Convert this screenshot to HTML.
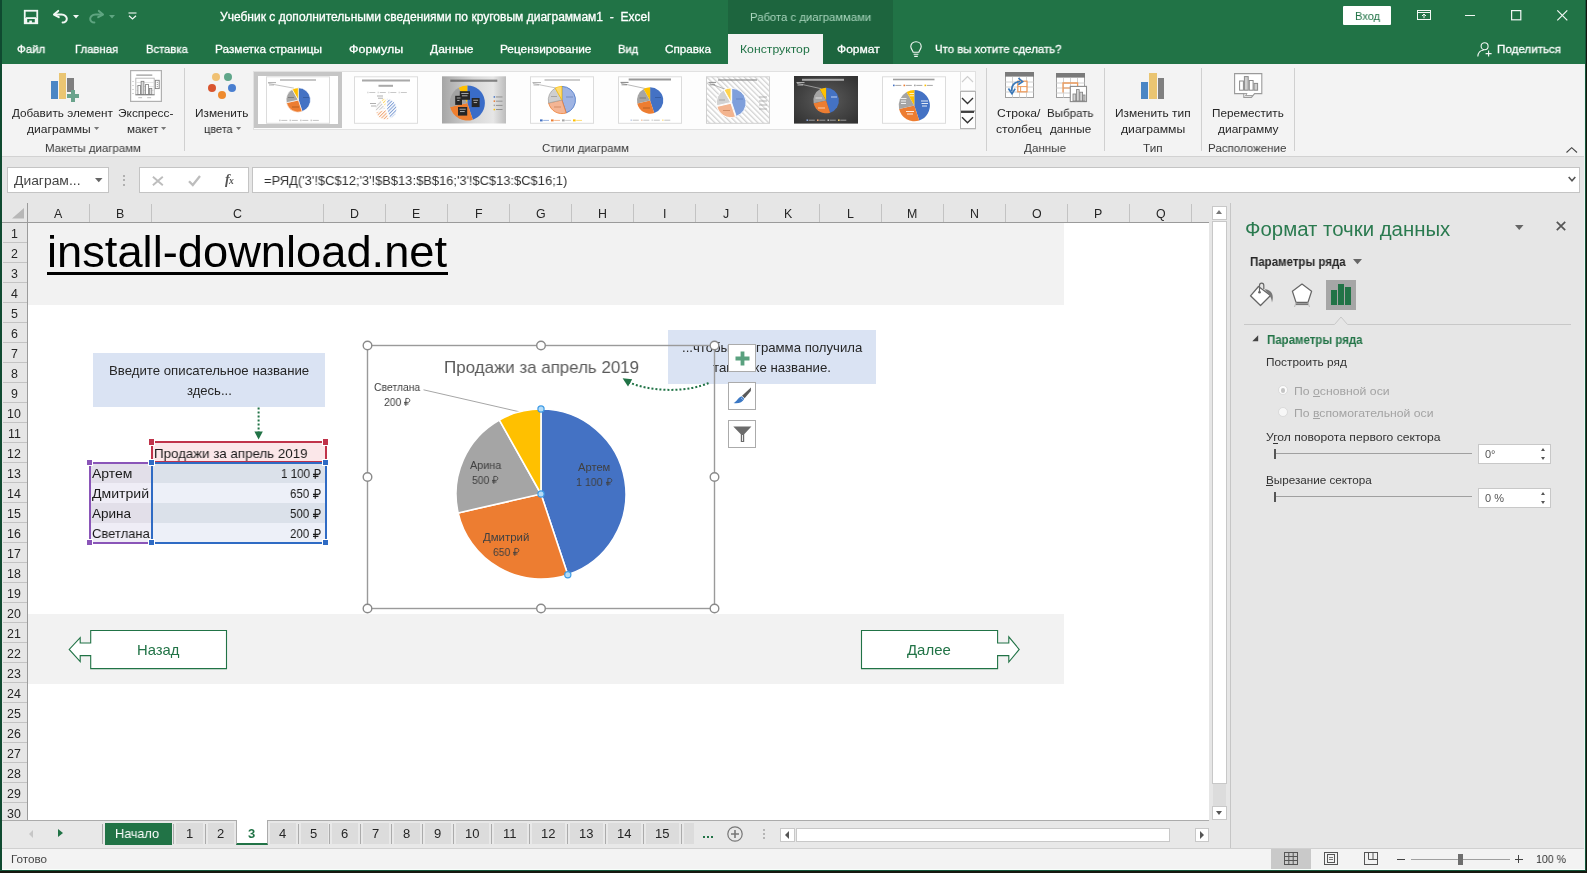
<!DOCTYPE html>
<html><head><meta charset="utf-8"><title>Excel</title>
<style>
html,body{margin:0;padding:0;}
body{width:1587px;height:873px;overflow:hidden;position:relative;background:#15170f;font-family:"Liberation Sans", sans-serif;}
body div,body span.t,body svg{position:absolute;}
span.t{white-space:nowrap;transform-origin:0 50%;will-change:transform;}
svg{overflow:visible;}
</style></head><body>
<div style="left:0px;top:0px;width:2px;height:870px;background:#0f4a30;"></div>
<div style="left:1585px;top:0px;width:1px;height:871px;background:#14553a;"></div>
<div style="left:0px;top:870px;width:1586px;height:1px;background:#14553a;"></div>
<div style="left:2px;top:0px;width:1583px;height:64px;background:#217346;"></div>
<div style="left:728px;top:0px;width:165px;height:64px;background:#1d653e;"></div>
<div style="left:728px;top:34px;width:95px;height:30px;background:#f3f3f3;"></div>
<span class="t" style="left:220.20px;top:9.64px;font-size:12px;line-height:14px;color:#fff;transform:scaleX(1.0022);white-space:pre;-webkit-text-stroke:0.3px #fff;">Учебник с дополнительными сведениями по круговым диаграммам1  -  Excel</span>
<span class="t" style="left:750.40px;top:9.93px;font-size:11.7px;line-height:14px;color:#a9d5bd;transform:scaleX(0.9692);">Работа с диаграммами</span>
<span class="t" style="left:17.30px;top:41.93px;font-size:11.7px;line-height:14px;color:#fff;transform:scaleX(0.9779);-webkit-text-stroke:0.3px #fff;">Файл</span>
<span class="t" style="left:75.40px;top:41.93px;font-size:11.7px;line-height:14px;color:#fff;transform:scaleX(0.9689);-webkit-text-stroke:0.3px #fff;">Главная</span>
<span class="t" style="left:146.20px;top:41.93px;font-size:11.7px;line-height:14px;color:#fff;transform:scaleX(0.9620);-webkit-text-stroke:0.3px #fff;">Вставка</span>
<span class="t" style="left:215.00px;top:41.93px;font-size:11.7px;line-height:14px;color:#fff;transform:scaleX(1.0091);-webkit-text-stroke:0.3px #fff;">Разметка страницы</span>
<span class="t" style="left:348.70px;top:41.93px;font-size:11.7px;line-height:14px;color:#fff;transform:scaleX(1.0676);-webkit-text-stroke:0.3px #fff;">Формулы</span>
<span class="t" style="left:430.00px;top:41.93px;font-size:11.7px;line-height:14px;color:#fff;transform:scaleX(1.0300);-webkit-text-stroke:0.3px #fff;">Данные</span>
<span class="t" style="left:500.00px;top:41.93px;font-size:11.7px;line-height:14px;color:#fff;transform:scaleX(1.0127);-webkit-text-stroke:0.3px #fff;">Рецензирование</span>
<span class="t" style="left:618.00px;top:41.93px;font-size:11.7px;line-height:14px;color:#fff;transform:scaleX(0.9595);-webkit-text-stroke:0.3px #fff;">Вид</span>
<span class="t" style="left:665.00px;top:41.93px;font-size:11.7px;line-height:14px;color:#fff;transform:scaleX(1.0031);-webkit-text-stroke:0.3px #fff;">Справка</span>
<span class="t" style="left:837.00px;top:41.93px;font-size:11.7px;line-height:14px;color:#fff;transform:scaleX(1.0305);-webkit-text-stroke:0.3px #fff;">Формат</span>
<span class="t" style="left:740.00px;top:41.93px;font-size:11.7px;line-height:14px;color:#217346;transform:scaleX(1.0459);">Конструктор</span>
<span class="t" style="left:935.20px;top:41.93px;font-size:11.7px;line-height:14px;color:#fff;transform:scaleX(0.9791);-webkit-text-stroke:0.3px #fff;">Что вы хотите сделать?</span>
<span class="t" style="left:1496.50px;top:41.93px;font-size:11.7px;line-height:14px;color:#fff;transform:scaleX(0.9915);-webkit-text-stroke:0.3px #fff;">Поделиться</span>
<div style="left:1343px;top:6px;width:48px;height:19px;background:#fff;border-radius:1px;"></div>
<span class="t" style="left:1354.90px;top:8.73px;font-size:11.7px;line-height:14px;color:#217346;transform:scaleX(0.9488);">Вход</span>
<svg style="left:24px;top:10px;" width="14" height="14" viewBox="0 0 14 14"><rect x="0.75" y="0.75" width="12.5" height="12.5" fill="none" stroke="#f2f7f4" stroke-width="1.8"/><rect x="2" y="7.2" width="10" height="1.8" fill="#f2f7f4"/><rect x="1" y="8" width="2.2" height="5" fill="#f2f7f4"/><rect x="10.8" y="8" width="2.2" height="5" fill="#f2f7f4"/><rect x="5.3" y="10.6" width="2.6" height="2.6" fill="#f2f7f4"/></svg>
<svg style="left:52.5px;top:9.6px;" width="15" height="14" viewBox="0 0 15 14"><g fill="none" stroke="#f2f7f4" stroke-width="2" stroke-linecap="round" stroke-linejoin="round"><path d="M5.2 0.9 L1 4.6 L5.8 7.2"/><path d="M1.6 4.6 H8.5 C12 4.6 13.8 7 13.8 8.8 C13.8 11 12 12.6 9.6 12.6"/></g></svg>
<svg style="left:88.5px;top:9.6px;" width="15" height="14" viewBox="0 0 15 14"><g transform="translate(15,0) scale(-1,1)" fill="none" stroke="#5fa581" stroke-width="2" stroke-linecap="round" stroke-linejoin="round"><path d="M5.2 0.9 L1 4.6 L5.8 7.2"/><path d="M1.6 4.6 H8.5 C12 4.6 13.8 7 13.8 8.8 C13.8 11 12 12.6 9.6 12.6"/></g></svg>
<svg style="left:72.6px;top:15.1px" width="6" height="3.48" viewBox="0 0 6 3.48"><path d="M0 0 H6 L3.0 3.48 Z" fill="#f2f7f4"/></svg>
<svg style="left:108.7px;top:15.1px" width="6" height="3.48" viewBox="0 0 6 3.48"><path d="M0 0 H6 L3.0 3.48 Z" fill="#5fa581"/></svg>
<svg style="left:127.5px;top:12px;" width="9" height="8" viewBox="0 0 9 8"><path d="M0.5 1 H8.5" stroke="#f2f7f4" stroke-width="1.1" fill="none"/><path d="M1 3.8 L4.5 7 L8 3.8" stroke="#f2f7f4" stroke-width="1.2" fill="none"/></svg>
<svg style="left:1416.5px;top:10px;" width="14" height="10" viewBox="0 0 14 10"><rect x="0.5" y="0.5" width="13" height="9" fill="none" stroke="#f2f7f4" stroke-width="1"/><path d="M0.5 2.5 H13.5" stroke="#f2f7f4" stroke-width="1"/><path d="M7 8.2 V4.2 M5 6 L7 4 L9 6" stroke="#f2f7f4" stroke-width="1" fill="none"/></svg>
<div style="left:1465px;top:15px;width:10px;height:1px;background:#f2f7f4;"></div>
<svg style="left:1511px;top:9.8px;" width="11" height="11" viewBox="0 0 11 11"><rect x="0.6" y="0.6" width="9.2" height="9.2" fill="none" stroke="#f2f7f4" stroke-width="1.2"/></svg>
<svg style="left:1556.8px;top:9.8px;" width="11" height="11" viewBox="0 0 11 11"><path d="M0.3 0.3 L10.3 10.3 M10.3 0.3 L0.3 10.3" stroke="#f2f7f4" stroke-width="1.2"/></svg>
<svg style="left:909.5px;top:40.5px;" width="12" height="17" viewBox="0 0 12 17"><path d="M6 0.7 C2.8 0.7 0.8 3 0.8 5.6 C0.8 8 2.6 9 3.2 11.3 H8.8 C9.4 9 11.2 8 11.2 5.6 C11.2 3 9.2 0.7 6 0.7 Z" fill="none" stroke="#f2f7f4" stroke-width="1.1"/><path d="M3.6 13.2 H8.4 M4.2 15.4 H7.8" stroke="#f2f7f4" stroke-width="1.1"/></svg>
<svg style="left:1476.5px;top:41.5px;" width="16" height="15" viewBox="0 0 16 15"><circle cx="7.6" cy="4.2" r="3.5" fill="none" stroke="#f2f7f4" stroke-width="1.1"/><path d="M0.8 14.5 C1.2 10 4 8.2 6.6 8.2" fill="none" stroke="#f2f7f4" stroke-width="1.1"/><path d="M11.6 8.6 V14.6 M8.6 11.6 H14.6" stroke="#f2f7f4" stroke-width="1.1"/></svg>
<div style="left:2px;top:64px;width:1583px;height:92px;background:#f3f3f3;"></div>
<div style="left:2px;top:156px;width:1583px;height:1px;background:#d2d2d2;"></div>
<div style="left:2px;top:157px;width:1583px;height:46px;background:#e6e6e6;"></div>
<span class="t" style="left:11.80px;top:106.33px;font-size:11.7px;line-height:14px;color:#262626;transform:scaleX(1.0052);">Добавить элемент</span>
<span class="t" style="left:27.00px;top:122.33px;font-size:11.7px;line-height:14px;color:#262626;transform:scaleX(1.0342);">диаграммы</span>
<span class="t" style="left:117.90px;top:106.33px;font-size:11.7px;line-height:14px;color:#262626;transform:scaleX(1.0183);">Экспресс-</span>
<span class="t" style="left:126.50px;top:122.33px;font-size:11.7px;line-height:14px;color:#262626;transform:scaleX(0.9920);">макет</span>
<span class="t" style="left:195.30px;top:106.33px;font-size:11.7px;line-height:14px;color:#262626;transform:scaleX(1.0126);">Изменить</span>
<span class="t" style="left:203.60px;top:122.33px;font-size:11.7px;line-height:14px;color:#262626;transform:scaleX(0.9376);">цвета</span>
<span class="t" style="left:996.80px;top:106.33px;font-size:11.7px;line-height:14px;color:#262626;transform:scaleX(1.0376);">Строка/</span>
<span class="t" style="left:996.30px;top:122.33px;font-size:11.7px;line-height:14px;color:#262626;transform:scaleX(1.0412);">столбец</span>
<span class="t" style="left:1047.40px;top:106.33px;font-size:11.7px;line-height:14px;color:#262626;transform:scaleX(0.9856);">Выбрать</span>
<span class="t" style="left:1050.00px;top:122.33px;font-size:11.7px;line-height:14px;color:#262626;transform:scaleX(1.0014);">данные</span>
<span class="t" style="left:1115.20px;top:106.33px;font-size:11.7px;line-height:14px;color:#262626;transform:scaleX(1.0190);">Изменить тип</span>
<span class="t" style="left:1121.00px;top:122.33px;font-size:11.7px;line-height:14px;color:#262626;transform:scaleX(1.0423);">диаграммы</span>
<span class="t" style="left:1212.20px;top:106.33px;font-size:11.7px;line-height:14px;color:#262626;transform:scaleX(1.0027);">Переместить</span>
<span class="t" style="left:1218.00px;top:122.33px;font-size:11.7px;line-height:14px;color:#262626;transform:scaleX(1.0224);">диаграмму</span>
<span class="t" style="left:44.60px;top:141.33px;font-size:11.7px;line-height:14px;color:#3a3a3a;transform:scaleX(0.9805);">Макеты диаграмм</span>
<span class="t" style="left:541.50px;top:141.33px;font-size:11.7px;line-height:14px;color:#3a3a3a;transform:scaleX(0.9655);">Стили диаграмм</span>
<span class="t" style="left:1024.00px;top:141.33px;font-size:11.7px;line-height:14px;color:#3a3a3a;transform:scaleX(0.9945);">Данные</span>
<span class="t" style="left:1143.00px;top:141.33px;font-size:11.7px;line-height:14px;color:#3a3a3a;transform:scaleX(1.0008);">Тип</span>
<span class="t" style="left:1208.20px;top:141.33px;font-size:11.7px;line-height:14px;color:#3a3a3a;transform:scaleX(0.9867);">Расположение</span>
<svg style="left:94.3px;top:127.2px" width="5.2" height="3.02" viewBox="0 0 5.2 3.02"><path d="M0 0 H5.2 L2.6 3.02 Z" fill="#777"/></svg>
<svg style="left:160.8px;top:127.2px" width="5.2" height="3.02" viewBox="0 0 5.2 3.02"><path d="M0 0 H5.2 L2.6 3.02 Z" fill="#777"/></svg>
<svg style="left:235.6px;top:127.2px" width="5.2" height="3.02" viewBox="0 0 5.2 3.02"><path d="M0 0 H5.2 L2.6 3.02 Z" fill="#777"/></svg>
<div style="left:184px;top:68px;width:1px;height:83px;background:#d0d0d0;"></div>
<div style="left:986px;top:68px;width:1px;height:83px;background:#d0d0d0;"></div>
<div style="left:1104px;top:68px;width:1px;height:83px;background:#d0d0d0;"></div>
<div style="left:1201px;top:68px;width:1px;height:83px;background:#d0d0d0;"></div>
<div style="left:1294px;top:68px;width:1px;height:83px;background:#d0d0d0;"></div>
<svg style="left:1566px;top:147px;" width="12" height="6" viewBox="0 0 12 6"><path d="M0.5 5.5 L5.7 0.7 L11 5.5" fill="none" stroke="#444" stroke-width="1.1"/></svg>
<div style="left:51px;top:81px;width:7px;height:17.5px;background:#4a86c5;"></div>
<div style="left:59px;top:73px;width:7px;height:25.5px;background:#eac572;"></div>
<div style="left:67px;top:78px;width:7px;height:14px;background:#7f7f7f;"></div>
<svg style="left:67px;top:89.8px;" width="12" height="12" viewBox="0 0 12 12"><path d="M4 0 H8 V4 H12 V8 H8 V12 H4 V8 H0 V4 H4 Z" fill="#6aa38c"/></svg>
<svg style="left:130px;top:70px;" width="32" height="32" viewBox="0 0 32 32"><rect x="0.6" y="0.6" width="30.8" height="30.8" fill="#fff" stroke="#b0b0b0" stroke-width="1.2"/><rect x="6.3" y="4.3" width="16" height="1.7" fill="#b5b5b5"/><rect x="5.8" y="8.2" width="18.4" height="16.7" fill="#fff" stroke="#b5b5b5" stroke-width="0.9"/><path d="M6 12.5H24M6 16.5H24M6 20.5H24" stroke="#e0e0e0" stroke-width="0.8"/><rect x="7.9" y="15.4" width="2.5" height="9.2" fill="#fff" stroke="#7f7f7f" stroke-width="0.8"/><rect x="11.1" y="11.3" width="2.8" height="13.3" fill="#d9d9d9" stroke="#7f7f7f" stroke-width="0.8"/><rect x="15.6" y="14.5" width="2.9" height="10.1" fill="#fff" stroke="#7f7f7f" stroke-width="0.8"/><rect x="19.3" y="18.5" width="2.5" height="6.1" fill="#d9d9d9" stroke="#7f7f7f" stroke-width="0.8"/><path d="M5.5 24.7H24.5" stroke="#7f7f7f" stroke-width="0.9"/><rect x="25.3" y="10.3" width="3.9" height="8.3" fill="#fff" stroke="#7f7f7f" stroke-width="0.9"/><path d="M26.8 12.4h1M26.8 14.5h1M26.8 16.6h1" stroke="#7f7f7f" stroke-width="0.9"/><path d="M8.3 27.7h3.8M17.2 27.7h3.9" stroke="#b5b5b5" stroke-width="0.9"/><path d="M2.2 11.5h1.6M2.2 15.5h1.6M2.2 19.5h1.6M2.2 23.5h1.6" stroke="#c0c0c0" stroke-width="0.8"/></svg>
<div style="left:212px;top:73.1px;width:8px;height:8px;background:#f0c173;border-radius:50%;"></div>
<div style="left:224px;top:73.1px;width:8px;height:8px;background:#5fa68a;border-radius:50%;"></div>
<div style="left:207.7px;top:83.7px;width:8px;height:8px;background:#d9552f;border-radius:50%;"></div>
<div style="left:227.8px;top:83.7px;width:8px;height:8px;background:#4a7fd0;border-radius:50%;"></div>
<div style="left:217.8px;top:90.8px;width:8px;height:8px;background:#ee8a2d;border-radius:50%;"></div>
<svg style="left:1005px;top:72px;" width="29" height="26" viewBox="0 0 29 26"><rect x="0.5" y="0.5" width="28" height="25" fill="#fff" stroke="#a0a0a0"/><rect x="0" y="0" width="29" height="4.6" fill="#7a7a7a"/><path d="M0.5 10H28.5M0.5 15H28.5M0.5 20H28.5M7.5 5V25.5M14.5 5V25.5M21.5 5V25.5" stroke="#d0d0d0" stroke-width="1"/><rect x="12.8" y="9.2" width="9.2" height="10.6" fill="#fff" stroke="#ec9a5c" stroke-width="1.3"/><path d="M12.8 14.6H22M15.6 14.6V19.8" stroke="#ec9a5c" stroke-width="1"/><path d="M6.8 19 C6 13.5 9.5 10 15 9.6" fill="none" stroke="#3b78b8" stroke-width="1.8"/><path d="M3.4 16.4 L7 21.6 L10.2 16.6" fill="none" stroke="#3b78b8" stroke-width="1.7"/><path d="M13.4 6.2 L17.6 9.6 L13.2 12.6" fill="none" stroke="#3b78b8" stroke-width="1.7"/></svg>
<svg style="left:1056px;top:73px;" width="31" height="29" viewBox="0 0 31 29"><rect x="0.5" y="0.5" width="28" height="24" fill="#fff" stroke="#a0a0a0"/><rect x="0" y="0" width="29" height="4.6" fill="#7a7a7a"/><path d="M0.5 10H28.5M0.5 15H28.5M0.5 20H28.5M7.5 5V24.5M14.5 5V24.5M21.5 5V24.5" stroke="#d0d0d0" stroke-width="1"/><path d="M7 19.5 V10 H21.6 V13" fill="none" stroke="#ec9a5c" stroke-width="1.3"/><path d="M7 15 H14" fill="none" stroke="#ec9a5c" stroke-width="1.1"/><rect x="14.3" y="13.4" width="16.2" height="15.2" fill="#fff" stroke="#8c8c8c" stroke-width="1.1"/><rect x="17" y="21" width="2.8" height="7" fill="#d4d4d4" stroke="#7f7f7f" stroke-width="0.8"/><rect x="20.4" y="16.6" width="2.8" height="11.4" fill="#d4d4d4" stroke="#7f7f7f" stroke-width="0.8"/><rect x="23.8" y="19.2" width="2.8" height="8.8" fill="#d4d4d4" stroke="#7f7f7f" stroke-width="0.8"/><rect x="27" y="22" width="2" height="6" fill="#d4d4d4" stroke="#7f7f7f" stroke-width="0.8"/></svg>
<div style="left:1140.5px;top:81.5px;width:7.3px;height:17.3px;background:#4a86c5;"></div>
<div style="left:1148.7px;top:73px;width:8px;height:25.8px;background:#eac572;"></div>
<div style="left:1157.5px;top:78px;width:6.8px;height:20.8px;background:#7f7f7f;"></div>
<svg style="left:1233.5px;top:72.7px;" width="29" height="26" viewBox="0 0 29 26"><path d="M0.6 0.6 H27.8 V20.6 H20.6 L17.4 24.4 H9.8 V20.6 H0.6 Z" fill="#fff" stroke="#9a9a9a" stroke-width="1.1"/><path d="M9.8 20.6 H13 L11.4 22.6 H18.8" fill="none" stroke="#9a9a9a" stroke-width="1"/><rect x="5.6" y="8" width="3.8" height="9.2" fill="#fff" stroke="#8a8a8a"/><rect x="10.4" y="3.6" width="3.8" height="13.6" fill="#cfcfcf" stroke="#8a8a8a"/><rect x="15.3" y="7.5" width="3.8" height="9.7" fill="#fff" stroke="#8a8a8a"/><rect x="20" y="10.4" width="3.6" height="6.8" fill="#cfcfcf" stroke="#8a8a8a"/></svg>
<div style="left:253px;top:70.5px;width:723px;height:59px;background:#fdfdfd;border:1px solid #e1e1e1;box-sizing:border-box;"></div>
<div style="left:254px;top:72px;width:88px;height:56px;background:#fff;border:4px solid #c6c6c6;box-sizing:border-box;"></div>
<svg style="left:0px;top:0px;" width="1587" height="873" viewBox="0 0 1587 873"><defs><pattern id="hat" width="3.8" height="3.8" patternUnits="userSpaceOnUse" patternTransform="rotate(-45)"><rect width="3.8" height="3.8" fill="#fff"/><rect width="1.3" height="3.8" fill="#d2d2d2"/></pattern><pattern id="hb" width="2.4" height="2.4" patternUnits="userSpaceOnUse" patternTransform="rotate(45)"><rect width="2.4" height="2.4" fill="#fff"/><rect width="1" height="2.4" fill="#7f9fd6"/></pattern><pattern id="ho" width="2.4" height="2.4" patternUnits="userSpaceOnUse" patternTransform="rotate(45)"><rect width="2.4" height="2.4" fill="#fff"/><rect width="1" height="2.4" fill="#f0a877"/></pattern><pattern id="hg" width="2.4" height="2.4" patternUnits="userSpaceOnUse" patternTransform="rotate(45)"><rect width="2.4" height="2.4" fill="#fff"/><rect width="1" height="2.4" fill="#c9c9c9"/></pattern><pattern id="hy" width="2.4" height="2.4" patternUnits="userSpaceOnUse" patternTransform="rotate(45)"><rect width="2.4" height="2.4" fill="#fff"/><rect width="1" height="2.4" fill="#ffd966"/></pattern><linearGradient id="g3" x1="0" y1="0" x2="1" y2="0"><stop offset="0" stop-color="#a6a6a6"/><stop offset="0.5" stop-color="#d8d8d8"/><stop offset="0.8" stop-color="#e6e6e6"/><stop offset="1" stop-color="#bcbcbc"/></linearGradient><radialGradient id="g7" cx="0.5" cy="0.5" r="0.65"><stop offset="0" stop-color="#5c5c5c"/><stop offset="1" stop-color="#333"/></radialGradient></defs><rect x="266.5" y="76.8" width="63" height="46.5" fill="#fff" stroke="#dcdcdc" stroke-width="1"/><rect x="280" y="79.3" width="36" height="1.4" fill="#9a9a9a" opacity="0.8"/><path d="M268.5 83.5 L294 88.2" stroke="#9a9a9a" stroke-width="0.6"/><rect x="268" y="82.1" width="8" height="1" fill="#9a9a9a" opacity="0.8"/><rect x="269" y="84.5" width="5" height="1" fill="#9a9a9a" opacity="0.7"/><path d="M298.30 100.00 L298.30 87.80 A12.2 12.2 0 0 1 302.14 111.58 Z" fill="#4472c4" stroke="#fff" stroke-width="0.6" /><path d="M298.30 100.00 L302.14 111.58 A12.2 12.2 0 0 1 286.41 102.71 Z" fill="#ed7d31" stroke="#fff" stroke-width="0.6" /><path d="M298.30 100.00 L286.41 102.71 A12.2 12.2 0 0 1 292.31 89.37 Z" fill="#a5a5a5" stroke="#fff" stroke-width="0.6" /><path d="M298.30 100.00 L292.31 89.37 A12.2 12.2 0 0 1 298.30 87.80 Z" fill="#ffc000" stroke="#fff" stroke-width="0.6" /><rect x="303" y="97.0" width="6" height="1" fill="#2f5597" opacity="0.7"/><rect x="292" y="106.5" width="7" height="1" fill="#a3531d" opacity="0.7"/><rect x="288" y="97.0" width="6" height="1" fill="#6d6d6d" opacity="0.7"/><rect x="279.0" y="119.60000000000001" width="1.6" height="1.6" fill="#ccc"/><rect x="281.3" y="119.9" width="6" height="1" fill="#c4c4c4"/><rect x="289.5" y="119.60000000000001" width="1.6" height="1.6" fill="#ccc"/><rect x="291.8" y="119.9" width="6" height="1" fill="#c4c4c4"/><rect x="300.0" y="119.60000000000001" width="1.6" height="1.6" fill="#ccc"/><rect x="302.3" y="119.9" width="6" height="1" fill="#c4c4c4"/><rect x="310.5" y="119.60000000000001" width="1.6" height="1.6" fill="#ccc"/><rect x="312.8" y="119.9" width="6" height="1" fill="#c4c4c4"/><rect x="354.5" y="76.8" width="63" height="46.5" fill="#fff" stroke="#dcdcdc" stroke-width="1"/><rect x="362" y="79.5" width="48" height="2" fill="#8c8c8c" opacity="0.75"/><rect x="378.5" y="84.8" width="14.5" height="2" fill="#8c8c8c" opacity="0.75"/><rect x="367.0" y="91.7" width="1.6" height="1.6" fill="#ddd"/><rect x="369.3" y="92.0" width="6" height="1" fill="#c9c9c9"/><rect x="377.5" y="91.7" width="1.6" height="1.6" fill="#ddd"/><rect x="379.8" y="92.0" width="6" height="1" fill="#c9c9c9"/><rect x="388.0" y="91.7" width="1.6" height="1.6" fill="#ddd"/><rect x="390.3" y="92.0" width="6" height="1" fill="#c9c9c9"/><rect x="398.5" y="91.7" width="1.6" height="1.6" fill="#ddd"/><rect x="400.8" y="92.0" width="6" height="1" fill="#c9c9c9"/><path d="M386.69 109.00 L386.69 98.80 A10.2 10.2 0 0 1 389.91 118.68 Z" fill="url(#hb)" stroke="#fff" stroke-width="0.8" /><path d="M385.81 109.62 L389.02 119.30 A10.2 10.2 0 0 1 375.86 111.89 Z" fill="url(#ho)" stroke="#fff" stroke-width="0.8" /><path d="M385.55 108.86 L375.61 111.13 A10.2 10.2 0 0 1 380.55 99.97 Z" fill="url(#hg)" stroke="#fff" stroke-width="0.8" /><path d="M385.95 108.52 L380.94 99.63 A10.2 10.2 0 0 1 385.95 98.32 Z" fill="url(#hy)" stroke="#fff" stroke-width="0.8" /><rect x="370" y="103.0" width="6" height="1" fill="#b0b0b0" opacity="1"/><rect x="371" y="105.5" width="5" height="1" fill="#b0b0b0" opacity="1"/><rect x="377" y="95.5" width="6" height="1" fill="#b0b0b0" opacity="1"/><rect x="378" y="97.7" width="5" height="1" fill="#b0b0b0" opacity="1"/><rect x="442" y="76.3" width="64" height="47.2" fill="url(#g3)"/><rect x="450.3" y="79.60000000000001" width="47.0" height="2.2" fill="#333" opacity="0.55"/><path d="M467.30 103.00 L467.30 85.40 A17.6 17.6 0 0 1 472.85 119.70 Z" fill="#3a6cc8" stroke="none" stroke-width="0" /><path d="M467.30 103.00 L472.85 119.70 A17.6 17.6 0 0 1 450.14 106.92 Z" fill="#ee7f30" stroke="none" stroke-width="0" /><path d="M467.30 103.00 L450.14 106.92 A17.6 17.6 0 0 1 458.66 87.66 Z" fill="#a2a2a2" stroke="none" stroke-width="0" /><path d="M467.30 103.00 L458.66 87.66 A17.6 17.6 0 0 1 467.30 85.40 Z" fill="#ffc000" stroke="none" stroke-width="0" /><rect x="459.8" y="91.2" width="10.2" height="8.6" fill="#262626"/><rect x="461.3" y="92.95" width="7.199999999999989" height="0.9" fill="#ddd" opacity="0.8"/><rect x="461.8" y="95.35" width="5.699999999999989" height="0.9" fill="#ddd" opacity="0.8"/><rect x="455.2" y="95.8" width="6.8" height="9.1" fill="#262626"/><rect x="456.7" y="97.55" width="3.8000000000000114" height="0.9" fill="#ddd" opacity="0.8"/><rect x="457.2" y="99.94999999999999" width="2.3000000000000114" height="0.9" fill="#ddd" opacity="0.8"/><rect x="471.7" y="98" width="7.9" height="9.1" fill="#262626"/><rect x="473.2" y="99.75" width="4.899999999999977" height="0.9" fill="#ddd" opacity="0.8"/><rect x="473.7" y="102.14999999999999" width="3.3999999999999773" height="0.9" fill="#ddd" opacity="0.8"/><rect x="458" y="107" width="9.2" height="8.6" fill="#262626"/><rect x="459.5" y="108.75" width="6.199999999999989" height="0.9" fill="#ddd" opacity="0.8"/><rect x="460" y="111.14999999999999" width="4.699999999999989" height="0.9" fill="#ddd" opacity="0.8"/><rect x="493.6" y="96.2" width="1.5" height="1.5" fill="#4472c4"/><rect x="496" y="96.5" width="6.5" height="0.9" fill="#8a8a8a"/><rect x="493.6" y="100.4" width="1.5" height="1.5" fill="#ed7d31"/><rect x="496" y="100.7" width="6.5" height="0.9" fill="#8a8a8a"/><rect x="493.6" y="104.60000000000001" width="1.5" height="1.5" fill="#a5a5a5"/><rect x="496" y="104.9" width="6.5" height="0.9" fill="#8a8a8a"/><rect x="493.6" y="108.80000000000001" width="1.5" height="1.5" fill="#ffc000"/><rect x="496" y="109.1" width="6.5" height="0.9" fill="#8a8a8a"/><rect x="530.5" y="76.8" width="63" height="46.5" fill="#fff" stroke="#dcdcdc" stroke-width="1"/><rect x="544.5" y="79.3" width="35.5" height="1.4" fill="#a8a8a8" opacity="0.8"/><path d="M533 83.5 L558.5 88.5" stroke="#9a9a9a" stroke-width="0.6"/><rect x="532.5" y="82.1" width="8.5" height="1" fill="#9a9a9a" opacity="0.8"/><rect x="533.5" y="84.5" width="5.5" height="1" fill="#9a9a9a" opacity="0.7"/><path d="M561.9 100 L561.90 86.40 A13.6 13.6 0 0 1 566.19 112.91 Z" fill="#9fb4e3" stroke="#4472c4" stroke-width="0.8"/><path d="M561.9 100 L566.19 112.91 A13.6 13.6 0 0 1 548.64 103.03 Z" fill="#f4b594" stroke="#ed7d31" stroke-width="0.8"/><path d="M561.9 100 L548.64 103.03 A13.6 13.6 0 0 1 555.23 88.15 Z" fill="#cfcfcf" stroke="#a5a5a5" stroke-width="0.8"/><path d="M561.9 100 L555.23 88.15 A13.6 13.6 0 0 1 561.90 86.40 Z" fill="#ffdc73" stroke="#ffc000" stroke-width="0.8"/><rect x="566" y="96.5" width="7" height="1" fill="#6d86b8" opacity="0.8"/><rect x="554" y="106.5" width="7" height="1" fill="#c9855c" opacity="0.8"/><rect x="551" y="96.0" width="6" height="1" fill="#999" opacity="0.8"/><rect x="540" y="119.4" width="2.6" height="2" fill="#4472c4"/><rect x="543.2" y="119.9" width="5.8" height="1" fill="#4472c4" opacity="0.55"/><rect x="551" y="119.4" width="2.6" height="2" fill="#ed7d31"/><rect x="554.2" y="119.9" width="5.8" height="1" fill="#ed7d31" opacity="0.55"/><rect x="562" y="119.4" width="2.6" height="2" fill="#a5a5a5"/><rect x="565.2" y="119.9" width="5.8" height="1" fill="#a5a5a5" opacity="0.55"/><rect x="573" y="119.4" width="2.6" height="2" fill="#ffc000"/><rect x="576.2" y="119.9" width="5.8" height="1" fill="#ffc000" opacity="0.55"/><rect x="618.5" y="76.8" width="63" height="46.5" fill="#fff" stroke="#dcdcdc" stroke-width="1"/><rect x="628.7" y="78.5" width="42.299999999999955" height="2" fill="#333" opacity="0.5"/><path d="M621 83.3 L646.5 88.8" stroke="#8a8a8a" stroke-width="0.6"/><rect x="620.5" y="81.9" width="8.0" height="1" fill="#666" opacity="0.8"/><rect x="621.5" y="84.3" width="5.5" height="1" fill="#666" opacity="0.7"/><path d="M650.10 100.50 L650.10 87.30 A13.2 13.2 0 0 1 654.26 113.03 Z" fill="#4472c4" stroke="none" stroke-width="0" /><path d="M650.10 100.50 L654.26 113.03 A13.2 13.2 0 0 1 637.23 103.44 Z" fill="#ed7d31" stroke="none" stroke-width="0" /><path d="M650.10 100.50 L637.23 103.44 A13.2 13.2 0 0 1 643.62 89.00 Z" fill="#a5a5a5" stroke="none" stroke-width="0" /><path d="M650.10 100.50 L643.62 89.00 A13.2 13.2 0 0 1 650.10 87.30 Z" fill="#ffc000" stroke="none" stroke-width="0" /><rect x="655" y="97.0" width="6" height="1" fill="#2f5597" opacity="0.7"/><rect x="643" y="107.5" width="7" height="1" fill="#a3531d" opacity="0.7"/><rect x="639.5" y="97.5" width="6.5" height="1" fill="#6d6d6d" opacity="0.7"/><rect x="630.5" y="119.4" width="1.6" height="1.6" fill="#c8d3ea"/><rect x="632.8" y="119.7" width="6" height="1" fill="#c4c4c4"/><rect x="641.0" y="119.4" width="1.6" height="1.6" fill="#f6cdb3"/><rect x="643.3" y="119.7" width="6" height="1" fill="#c4c4c4"/><rect x="651.5" y="119.4" width="1.6" height="1.6" fill="#ddd"/><rect x="653.8" y="119.7" width="6" height="1" fill="#c4c4c4"/><rect x="662.0" y="119.4" width="1.6" height="1.6" fill="#ffe7a0"/><rect x="664.3" y="119.7" width="6" height="1" fill="#c4c4c4"/><rect x="706.5" y="76.8" width="63" height="46.5" fill="url(#hat)" stroke="#d0d0d0"/><rect x="718" y="79.25" width="39" height="1.5" fill="#8c8c8c" opacity="0.8"/><path d="M709.5 83.3 L727 90" stroke="#8a8a8a" stroke-width="0.6"/><rect x="708.5" y="81.9" width="7.5" height="1" fill="#777" opacity="0.8"/><rect x="709.5" y="84.3" width="5.5" height="1" fill="#777" opacity="0.7"/><path d="M731.69 102.72 L731.69 88.32 A14.4 14.4 0 0 1 736.23 116.39 Z" fill="#7f9fdb" stroke="#fff" stroke-width="0.9"/><path d="M730.95 103.24 L735.49 116.90 A14.4 14.4 0 0 1 716.92 106.44 Z" fill="#f3b48f" stroke="#fff" stroke-width="0.9"/><path d="M730.74 102.60 L716.70 105.80 A14.4 14.4 0 0 1 723.68 90.05 Z" fill="#d2d2d2" stroke="#fff" stroke-width="0.9"/><path d="M731.07 102.32 L724.01 89.77 A14.4 14.4 0 0 1 731.07 87.92 Z" fill="#ffd34d" stroke="#fff" stroke-width="0.9"/><rect x="736" y="98.5" width="7" height="1" fill="#5f7fc0" opacity="0.8"/><rect x="723" y="110.0" width="7" height="1" fill="#c9855c" opacity="0.8"/><rect x="719" y="99.5" width="6" height="1" fill="#999" opacity="0.8"/><rect x="759" y="96.55" width="8" height="0.9" fill="#9a9a9a" opacity="0.8"/><rect x="759" y="100.55" width="8" height="0.9" fill="#9a9a9a" opacity="0.8"/><rect x="759" y="104.55" width="8" height="0.9" fill="#9a9a9a" opacity="0.8"/><rect x="759" y="108.55" width="8" height="0.9" fill="#9a9a9a" opacity="0.8"/><rect x="794" y="76.0" width="64" height="47.6" fill="url(#g7)"/><rect x="802" y="78.8" width="42" height="2" fill="#f2f2f2" opacity="0.6"/><path d="M797 83.3 L821.5 88.8" stroke="#d0d0d0" stroke-width="0.6"/><rect x="796.5" y="82.1" width="8.0" height="1" fill="#ddd" opacity="0.8"/><rect x="797.5" y="84.5" width="5.5" height="1" fill="#ddd" opacity="0.7"/><path d="M826.10 100.50 L826.10 87.70 A12.8 12.8 0 0 1 830.13 112.65 Z" fill="#4472c4" stroke="none" stroke-width="0" /><path d="M826.10 100.50 L830.13 112.65 A12.8 12.8 0 0 1 813.62 103.35 Z" fill="#ed7d31" stroke="none" stroke-width="0" /><path d="M826.10 100.50 L813.62 103.35 A12.8 12.8 0 0 1 819.82 89.35 Z" fill="#a5a5a5" stroke="none" stroke-width="0" /><path d="M826.10 100.50 L819.82 89.35 A12.8 12.8 0 0 1 826.10 87.70 Z" fill="#ffc000" stroke="none" stroke-width="0" /><rect x="831" y="96.5" width="6" height="1" fill="#dfe8ff" opacity="0.8"/><rect x="818" y="107.5" width="7" height="1" fill="#ffe2cf" opacity="0.8"/><rect x="815.5" y="97.5" width="6.5" height="1" fill="#eee" opacity="0.8"/><rect x="806.5" y="119.4" width="1.6" height="1.6" fill="#8aa3d6"/><rect x="808.8" y="119.7" width="6" height="1" fill="#9a9a9a"/><rect x="817.0" y="119.4" width="1.6" height="1.6" fill="#e9a06f"/><rect x="819.3" y="119.7" width="6" height="1" fill="#9a9a9a"/><rect x="827.5" y="119.4" width="1.6" height="1.6" fill="#bbb"/><rect x="829.8" y="119.7" width="6" height="1" fill="#9a9a9a"/><rect x="838.0" y="119.4" width="1.6" height="1.6" fill="#e6c765"/><rect x="840.3" y="119.7" width="6" height="1" fill="#9a9a9a"/><rect x="882.5" y="76.8" width="63" height="46.5" fill="#fff" stroke="#dcdcdc" stroke-width="1"/><rect x="893" y="78.7" width="41.5" height="1.6" fill="#404040" opacity="0.5"/><rect x="893.0" y="84.60000000000001" width="1.6" height="1.6" fill="#4472c4"/><rect x="895.3" y="84.9" width="6" height="1" fill="#a8a8a8"/><rect x="903.5" y="84.60000000000001" width="1.6" height="1.6" fill="#ed7d31"/><rect x="905.8" y="84.9" width="6" height="1" fill="#a8a8a8"/><rect x="914.0" y="84.60000000000001" width="1.6" height="1.6" fill="#a5a5a5"/><rect x="916.3" y="84.9" width="6" height="1" fill="#a8a8a8"/><rect x="924.5" y="84.60000000000001" width="1.6" height="1.6" fill="#ffc000"/><rect x="926.8" y="84.9" width="6" height="1" fill="#a8a8a8"/><path d="M914.30 105.60 L914.30 90.00 A15.6 15.6 0 0 1 919.22 120.41 Z" fill="#4472c4" stroke="none" stroke-width="0" /><path d="M914.30 105.60 L919.22 120.41 A15.6 15.6 0 0 1 899.09 109.07 Z" fill="#ed7d31" stroke="none" stroke-width="0" /><path d="M914.30 105.60 L899.09 109.07 A15.6 15.6 0 0 1 906.64 92.01 Z" fill="#a5a5a5" stroke="none" stroke-width="0" /><path d="M914.30 105.60 L906.64 92.01 A15.6 15.6 0 0 1 914.30 90.00 Z" fill="#ffc000" stroke="none" stroke-width="0" /><rect x="921" y="100.5" width="7" height="1" fill="#fff" opacity="0.85"/><rect x="921.5" y="103.0" width="6.5" height="1" fill="#fff" opacity="0.85"/><rect x="922" y="105.5" width="5" height="1" fill="#fff" opacity="0.85"/><rect x="906" y="111.0" width="8" height="1" fill="#fff" opacity="0.85"/><rect x="907" y="113.5" width="6" height="1" fill="#fff" opacity="0.85"/><rect x="900.5" y="98.0" width="6.0" height="1" fill="#fff" opacity="0.85"/><rect x="901" y="100.5" width="5" height="1" fill="#fff" opacity="0.85"/><rect x="901" y="103.0" width="5" height="1" fill="#fff" opacity="0.85"/><rect x="909.5" y="93.05" width="4.5" height="0.9" fill="#fff" opacity="0.85"/><rect x="909.5" y="95.35" width="4.5" height="0.9" fill="#fff" opacity="0.85"/></svg>
<div style="left:959.5px;top:71px;width:16px;height:19.5px;background:#fdfdfd;border:1px solid #e1e1e1;box-sizing:border-box;"></div>
<div style="left:959.5px;top:91px;width:16px;height:19.5px;background:#fdfdfd;border:1px solid #b4b4b4;box-sizing:border-box;"></div>
<div style="left:959.5px;top:110.5px;width:16px;height:18.8px;background:#fdfdfd;border:1px solid #b4b4b4;box-sizing:border-box;"></div>
<svg style="left:961px;top:75px;" width="13" height="8" viewBox="0 0 13 8"><path d="M1 7 L6.5 1.5 L12 7" fill="none" stroke="#cfcfcf" stroke-width="1.2"/></svg>
<svg style="left:961px;top:97px;" width="13" height="8" viewBox="0 0 13 8"><path d="M1 1 L6.5 6.5 L12 1" fill="none" stroke="#333" stroke-width="1.4"/></svg>
<svg style="left:961px;top:111.3px;" width="13" height="14" viewBox="0 0 13 14"><path d="M0 1 H13" stroke="#333" stroke-width="1.8"/><path d="M1 6.2 L6.5 11.7 L12 6.2" fill="none" stroke="#333" stroke-width="1.4"/></svg>
<div style="left:7px;top:167px;width:102px;height:26px;background:#fff;border:1px solid #c4c4c4;box-sizing:border-box;"></div>
<span class="t" style="left:13.80px;top:172.75px;font-size:13px;line-height:16px;color:#444;transform:scaleX(1.0677);">Диаграм...</span>
<svg style="left:94.5px;top:177.6px" width="7.5" height="4.35" viewBox="0 0 7.5 4.35"><path d="M0 0 H7.5 L3.75 4.35 Z" fill="#666"/></svg>
<div style="left:123px;top:175.3px;width:2px;height:2px;background:#b0b0b0;"></div>
<div style="left:123px;top:179.4px;width:2px;height:2px;background:#b0b0b0;"></div>
<div style="left:123px;top:183.5px;width:2px;height:2px;background:#b0b0b0;"></div>
<div style="left:139px;top:167px;width:110px;height:26px;background:#fff;border:1px solid #c4c4c4;box-sizing:border-box;"></div>
<svg style="left:152px;top:175.5px;" width="12" height="10" viewBox="0 0 12 10"><path d="M0.9 0.7 L10.8 9.3 M10.8 0.7 L0.9 9.3" stroke="#bdbdbd" stroke-width="1.9"/></svg>
<svg style="left:188px;top:175px;" width="13" height="11.5" viewBox="0 0 13 11.5"><path d="M1 6.2 L4.8 10 L12 1" fill="none" stroke="#bdbdbd" stroke-width="2.3"/></svg>
<span class="t" style="left:224.50px;top:170.96px;font-size:14px;line-height:17px;color:#555;transform:scaleX(1.0000);font-family:'Liberation Serif',serif;font-style:italic;font-weight:700;">f</span>
<span class="t" style="left:229.30px;top:175.68px;font-size:9.5px;line-height:11px;color:#555;transform:scaleX(1.0000);font-family:'Liberation Serif',serif;font-style:italic;font-weight:700;">x</span>
<div style="left:252px;top:167px;width:1328px;height:26px;background:#fff;border:1px solid #c4c4c4;box-sizing:border-box;"></div>
<span class="t" style="left:264.30px;top:172.76px;font-size:13.5px;line-height:16px;color:#333;transform:scaleX(0.9552);">=РЯД('3'!$C$12;'3'!$B$13:$B$16;'3'!$C$13:$C$16;1)</span>
<svg style="left:1567.5px;top:176px;" width="8" height="7" viewBox="0 0 8 7"><path d="M0.7 1 L4 4.8 L7.3 1" fill="none" stroke="#555" stroke-width="1.6"/></svg>
<div style="left:2px;top:203px;width:1207px;height:20px;background:#e6e6e6;"></div>
<div style="left:2px;top:223px;width:26px;height:597px;background:#e6e6e6;"></div>
<div style="left:28px;top:223px;width:1181px;height:597px;background:#fff;"></div>
<div style="left:2px;top:222px;width:1207px;height:1px;background:#9b9b9b;"></div>
<div style="left:27px;top:203px;width:1px;height:617px;background:#9b9b9b;"></div>
<span class="t" style="left:54.37px;top:206.94px;font-size:12.4px;line-height:15px;color:#262626;transform:scaleX(1.0000);">A</span>
<div style="left:89px;top:204px;width:1px;height:18px;background:#c3c3c3;"></div>
<span class="t" style="left:116.37px;top:206.94px;font-size:12.4px;line-height:15px;color:#262626;transform:scaleX(1.0000);">B</span>
<div style="left:151px;top:204px;width:1px;height:18px;background:#c3c3c3;"></div>
<span class="t" style="left:233.02px;top:206.94px;font-size:12.4px;line-height:15px;color:#262626;transform:scaleX(1.0000);">C</span>
<div style="left:323px;top:204px;width:1px;height:18px;background:#c3c3c3;"></div>
<span class="t" style="left:350.02px;top:206.94px;font-size:12.4px;line-height:15px;color:#262626;transform:scaleX(1.0000);">D</span>
<div style="left:385px;top:204px;width:1px;height:18px;background:#c3c3c3;"></div>
<span class="t" style="left:412.37px;top:206.94px;font-size:12.4px;line-height:15px;color:#262626;transform:scaleX(1.0000);">E</span>
<div style="left:447px;top:204px;width:1px;height:18px;background:#c3c3c3;"></div>
<span class="t" style="left:474.71px;top:206.94px;font-size:12.4px;line-height:15px;color:#262626;transform:scaleX(1.0000);">F</span>
<div style="left:509px;top:204px;width:1px;height:18px;background:#c3c3c3;"></div>
<span class="t" style="left:535.68px;top:206.94px;font-size:12.4px;line-height:15px;color:#262626;transform:scaleX(1.0000);">G</span>
<div style="left:571px;top:204px;width:1px;height:18px;background:#c3c3c3;"></div>
<span class="t" style="left:598.02px;top:206.94px;font-size:12.4px;line-height:15px;color:#262626;transform:scaleX(1.0000);">H</span>
<div style="left:633px;top:204px;width:1px;height:18px;background:#c3c3c3;"></div>
<span class="t" style="left:662.77px;top:206.94px;font-size:12.4px;line-height:15px;color:#262626;transform:scaleX(1.0000);">I</span>
<div style="left:695px;top:204px;width:1px;height:18px;background:#c3c3c3;"></div>
<span class="t" style="left:723.40px;top:206.94px;font-size:12.4px;line-height:15px;color:#262626;transform:scaleX(1.0000);">J</span>
<div style="left:757px;top:204px;width:1px;height:18px;background:#c3c3c3;"></div>
<span class="t" style="left:784.37px;top:206.94px;font-size:12.4px;line-height:15px;color:#262626;transform:scaleX(1.0000);">K</span>
<div style="left:819px;top:204px;width:1px;height:18px;background:#c3c3c3;"></div>
<span class="t" style="left:847.05px;top:206.94px;font-size:12.4px;line-height:15px;color:#262626;transform:scaleX(1.0000);">L</span>
<div style="left:881px;top:204px;width:1px;height:18px;background:#c3c3c3;"></div>
<span class="t" style="left:907.34px;top:206.94px;font-size:12.4px;line-height:15px;color:#262626;transform:scaleX(1.0000);">M</span>
<div style="left:943px;top:204px;width:1px;height:18px;background:#c3c3c3;"></div>
<span class="t" style="left:970.02px;top:206.94px;font-size:12.4px;line-height:15px;color:#262626;transform:scaleX(1.0000);">N</span>
<div style="left:1005px;top:204px;width:1px;height:18px;background:#c3c3c3;"></div>
<span class="t" style="left:1031.68px;top:206.94px;font-size:12.4px;line-height:15px;color:#262626;transform:scaleX(1.0000);">O</span>
<div style="left:1067px;top:204px;width:1px;height:18px;background:#c3c3c3;"></div>
<span class="t" style="left:1094.37px;top:206.94px;font-size:12.4px;line-height:15px;color:#262626;transform:scaleX(1.0000);">P</span>
<div style="left:1129px;top:204px;width:1px;height:18px;background:#c3c3c3;"></div>
<span class="t" style="left:1155.68px;top:206.94px;font-size:12.4px;line-height:15px;color:#262626;transform:scaleX(1.0000);">Q</span>
<div style="left:1191px;top:204px;width:1px;height:18px;background:#c3c3c3;"></div>
<div style="left:1208.5px;top:222px;width:1px;height:598px;background:#a9a9a9;"></div>
<span class="t" style="left:10.75px;top:226.84px;font-size:12.4px;line-height:15px;color:#262626;transform:scaleX(1.0000);">1</span>
<div style="left:3px;top:242px;width:24px;height:1px;background:#c3c3c3;"></div>
<span class="t" style="left:10.75px;top:246.84px;font-size:12.4px;line-height:15px;color:#262626;transform:scaleX(1.0000);">2</span>
<div style="left:3px;top:262px;width:24px;height:1px;background:#c3c3c3;"></div>
<span class="t" style="left:10.75px;top:266.84px;font-size:12.4px;line-height:15px;color:#262626;transform:scaleX(1.0000);">3</span>
<div style="left:3px;top:282px;width:24px;height:1px;background:#c3c3c3;"></div>
<span class="t" style="left:10.75px;top:286.84px;font-size:12.4px;line-height:15px;color:#262626;transform:scaleX(1.0000);">4</span>
<div style="left:3px;top:302px;width:24px;height:1px;background:#c3c3c3;"></div>
<span class="t" style="left:10.75px;top:306.84px;font-size:12.4px;line-height:15px;color:#262626;transform:scaleX(1.0000);">5</span>
<div style="left:3px;top:322px;width:24px;height:1px;background:#c3c3c3;"></div>
<span class="t" style="left:10.75px;top:326.84px;font-size:12.4px;line-height:15px;color:#262626;transform:scaleX(1.0000);">6</span>
<div style="left:3px;top:342px;width:24px;height:1px;background:#c3c3c3;"></div>
<span class="t" style="left:10.75px;top:346.84px;font-size:12.4px;line-height:15px;color:#262626;transform:scaleX(1.0000);">7</span>
<div style="left:3px;top:362px;width:24px;height:1px;background:#c3c3c3;"></div>
<span class="t" style="left:10.75px;top:366.84px;font-size:12.4px;line-height:15px;color:#262626;transform:scaleX(1.0000);">8</span>
<div style="left:3px;top:382px;width:24px;height:1px;background:#c3c3c3;"></div>
<span class="t" style="left:10.75px;top:386.84px;font-size:12.4px;line-height:15px;color:#262626;transform:scaleX(1.0000);">9</span>
<div style="left:3px;top:402px;width:24px;height:1px;background:#c3c3c3;"></div>
<span class="t" style="left:7.30px;top:406.84px;font-size:12.4px;line-height:15px;color:#262626;transform:scaleX(1.0000);">10</span>
<div style="left:3px;top:422px;width:24px;height:1px;background:#c3c3c3;"></div>
<span class="t" style="left:7.76px;top:426.84px;font-size:12.4px;line-height:15px;color:#262626;transform:scaleX(1.0000);">11</span>
<div style="left:3px;top:442px;width:24px;height:1px;background:#c3c3c3;"></div>
<span class="t" style="left:7.30px;top:446.84px;font-size:12.4px;line-height:15px;color:#262626;transform:scaleX(1.0000);">12</span>
<div style="left:3px;top:462px;width:24px;height:1px;background:#c3c3c3;"></div>
<span class="t" style="left:7.30px;top:466.84px;font-size:12.4px;line-height:15px;color:#262626;transform:scaleX(1.0000);">13</span>
<div style="left:3px;top:482px;width:24px;height:1px;background:#c3c3c3;"></div>
<span class="t" style="left:7.30px;top:486.84px;font-size:12.4px;line-height:15px;color:#262626;transform:scaleX(1.0000);">14</span>
<div style="left:3px;top:502px;width:24px;height:1px;background:#c3c3c3;"></div>
<span class="t" style="left:7.30px;top:506.84px;font-size:12.4px;line-height:15px;color:#262626;transform:scaleX(1.0000);">15</span>
<div style="left:3px;top:522px;width:24px;height:1px;background:#c3c3c3;"></div>
<span class="t" style="left:7.30px;top:526.84px;font-size:12.4px;line-height:15px;color:#262626;transform:scaleX(1.0000);">16</span>
<div style="left:3px;top:542px;width:24px;height:1px;background:#c3c3c3;"></div>
<span class="t" style="left:7.30px;top:546.84px;font-size:12.4px;line-height:15px;color:#262626;transform:scaleX(1.0000);">17</span>
<div style="left:3px;top:562px;width:24px;height:1px;background:#c3c3c3;"></div>
<span class="t" style="left:7.30px;top:566.84px;font-size:12.4px;line-height:15px;color:#262626;transform:scaleX(1.0000);">18</span>
<div style="left:3px;top:582px;width:24px;height:1px;background:#c3c3c3;"></div>
<span class="t" style="left:7.30px;top:586.84px;font-size:12.4px;line-height:15px;color:#262626;transform:scaleX(1.0000);">19</span>
<div style="left:3px;top:602px;width:24px;height:1px;background:#c3c3c3;"></div>
<span class="t" style="left:7.30px;top:606.84px;font-size:12.4px;line-height:15px;color:#262626;transform:scaleX(1.0000);">20</span>
<div style="left:3px;top:622px;width:24px;height:1px;background:#c3c3c3;"></div>
<span class="t" style="left:7.30px;top:626.84px;font-size:12.4px;line-height:15px;color:#262626;transform:scaleX(1.0000);">21</span>
<div style="left:3px;top:642px;width:24px;height:1px;background:#c3c3c3;"></div>
<span class="t" style="left:7.30px;top:646.84px;font-size:12.4px;line-height:15px;color:#262626;transform:scaleX(1.0000);">22</span>
<div style="left:3px;top:662px;width:24px;height:1px;background:#c3c3c3;"></div>
<span class="t" style="left:7.30px;top:666.84px;font-size:12.4px;line-height:15px;color:#262626;transform:scaleX(1.0000);">23</span>
<div style="left:3px;top:682px;width:24px;height:1px;background:#c3c3c3;"></div>
<span class="t" style="left:7.30px;top:686.84px;font-size:12.4px;line-height:15px;color:#262626;transform:scaleX(1.0000);">24</span>
<div style="left:3px;top:702px;width:24px;height:1px;background:#c3c3c3;"></div>
<span class="t" style="left:7.30px;top:706.84px;font-size:12.4px;line-height:15px;color:#262626;transform:scaleX(1.0000);">25</span>
<div style="left:3px;top:722px;width:24px;height:1px;background:#c3c3c3;"></div>
<span class="t" style="left:7.30px;top:726.84px;font-size:12.4px;line-height:15px;color:#262626;transform:scaleX(1.0000);">26</span>
<div style="left:3px;top:742px;width:24px;height:1px;background:#c3c3c3;"></div>
<span class="t" style="left:7.30px;top:746.84px;font-size:12.4px;line-height:15px;color:#262626;transform:scaleX(1.0000);">27</span>
<div style="left:3px;top:762px;width:24px;height:1px;background:#c3c3c3;"></div>
<span class="t" style="left:7.30px;top:766.84px;font-size:12.4px;line-height:15px;color:#262626;transform:scaleX(1.0000);">28</span>
<div style="left:3px;top:782px;width:24px;height:1px;background:#c3c3c3;"></div>
<span class="t" style="left:7.30px;top:786.84px;font-size:12.4px;line-height:15px;color:#262626;transform:scaleX(1.0000);">29</span>
<div style="left:3px;top:802px;width:24px;height:1px;background:#c3c3c3;"></div>
<span class="t" style="left:7.30px;top:806.84px;font-size:12.4px;line-height:15px;color:#262626;transform:scaleX(1.0000);">30</span>
<svg style="left:12.2px;top:208.2px;" width="12" height="11" viewBox="0 0 12 11"><path d="M12 0 L12 10.4 L0 10.4 Z" fill="#b7b7b7"/></svg>
<div style="left:28px;top:223px;width:1036px;height:82px;background:#f2f2f2;"></div>
<div style="left:28px;top:614px;width:1036px;height:70px;background:#f2f2f2;"></div>
<span class="t" style="left:46.90px;top:225.01px;font-size:44px;line-height:53px;color:#000;transform:scaleX(1.0287);">install-download.net</span>
<div style="left:46.5px;top:272px;width:401px;height:3.2px;background:#000;"></div>
<div style="left:93px;top:353px;width:232px;height:54px;background:#dae3f3;"></div>
<span class="t" style="left:108.90px;top:362.95px;font-size:13px;line-height:16px;color:#262626;transform:scaleX(1.0165);">Введите описательное название</span>
<span class="t" style="left:186.60px;top:383.18px;font-size:13px;line-height:16px;color:#262626;transform:scaleX(1.0043);">здесь...</span>
<div style="left:668px;top:330px;width:208px;height:54px;background:#dae3f3;"></div>
<span class="t" style="left:682.00px;top:339.78px;font-size:13px;line-height:16px;color:#262626;transform:scaleX(1.0131);">...чтобы диаграмма получила</span>
<span class="t" style="left:713.00px;top:360.38px;font-size:13px;line-height:16px;color:#262626;transform:scaleX(1.0174);">такое же название.</span>
<svg style="left:250px;top:405px;" width="20" height="40" viewBox="0 0 20 40"><path d="M8.6 2.5 V27" stroke="#217346" stroke-width="2" stroke-dasharray="2 2" fill="none"/><path d="M4.4 26.6 H12.8 L8.6 34.4 Z" fill="#217346"/></svg>
<div style="left:152px;top:463px;width:174px;height:20px;background:#dbe1ea;"></div>
<div style="left:152px;top:483px;width:174px;height:20px;background:#edf0f8;"></div>
<div style="left:152px;top:503px;width:174px;height:20px;background:#dbe1ea;"></div>
<div style="left:152px;top:523px;width:174px;height:20px;background:#edf0f8;"></div>
<div style="left:90px;top:463px;width:62px;height:20px;background:#e2dfe9;"></div>
<div style="left:90px;top:483px;width:62px;height:20px;background:#efedf6;"></div>
<div style="left:90px;top:503px;width:62px;height:20px;background:#e2dfe9;"></div>
<div style="left:90px;top:523px;width:62px;height:20px;background:#efedf6;"></div>
<div style="left:152px;top:443px;width:174px;height:20px;background:#fbe7e9;"></div>
<span class="t" style="left:154.30px;top:445.76px;font-size:13.5px;line-height:16px;color:#1a1a1a;transform:scaleX(0.9854);">Продажи за апрель 2019</span>
<span class="t" style="left:92.30px;top:465.96px;font-size:13.5px;line-height:16px;color:#1a1a1a;transform:scaleX(1.0347);">Артем</span>
<span class="t" style="left:92.30px;top:485.96px;font-size:13.5px;line-height:16px;color:#1a1a1a;transform:scaleX(1.0429);">Дмитрий</span>
<span class="t" style="left:92.30px;top:505.96px;font-size:13.5px;line-height:16px;color:#1a1a1a;transform:scaleX(0.9992);">Арина</span>
<span class="t" style="left:92.30px;top:525.96px;font-size:13.5px;line-height:16px;color:#1a1a1a;transform:scaleX(0.9637);">Светлана</span>
<span class="t" style="left:280.50px;top:465.96px;font-size:13.5px;line-height:16px;color:#1a1a1a;transform:scaleX(0.8609);">1 100</span>
<svg style="left:313.24px;top:468.97px;" width="7.56" height="9.67" viewBox="0 0 7.56 9.67"><path d="M2.27 9.67 V0.55 H4.69 C7.94 0.55 7.94 5.41 4.69 5.41 H0 M0 7.35 H5.44" fill="none" stroke="#1a1a1a" stroke-width="1.1"/></svg>
<span class="t" style="left:290.40px;top:485.96px;font-size:13.5px;line-height:16px;color:#1a1a1a;transform:scaleX(0.8519);">650</span>
<svg style="left:313.24px;top:488.97px;" width="7.56" height="9.67" viewBox="0 0 7.56 9.67"><path d="M2.27 9.67 V0.55 H4.69 C7.94 0.55 7.94 5.41 4.69 5.41 H0 M0 7.35 H5.44" fill="none" stroke="#1a1a1a" stroke-width="1.1"/></svg>
<span class="t" style="left:290.40px;top:505.96px;font-size:13.5px;line-height:16px;color:#1a1a1a;transform:scaleX(0.8519);">500</span>
<svg style="left:313.24px;top:508.97px;" width="7.56" height="9.67" viewBox="0 0 7.56 9.67"><path d="M2.27 9.67 V0.55 H4.69 C7.94 0.55 7.94 5.41 4.69 5.41 H0 M0 7.35 H5.44" fill="none" stroke="#1a1a1a" stroke-width="1.1"/></svg>
<span class="t" style="left:290.40px;top:525.96px;font-size:13.5px;line-height:16px;color:#1a1a1a;transform:scaleX(0.8519);">200</span>
<svg style="left:313.24px;top:528.97px;" width="7.56" height="9.67" viewBox="0 0 7.56 9.67"><path d="M2.27 9.67 V0.55 H4.69 C7.94 0.55 7.94 5.41 4.69 5.41 H0 M0 7.35 H5.44" fill="none" stroke="#1a1a1a" stroke-width="1.1"/></svg>
<div style="left:150.5px;top:441px;width:176px;height:22px;border:2px solid #c0334a;box-sizing:border-box;"></div>
<div style="left:88.5px;top:461.5px;width:64px;height:82px;border:2px solid #8a55b8;box-sizing:border-box;"></div>
<div style="left:150.5px;top:461.5px;width:176px;height:82px;border:2px solid #2f6bc4;box-sizing:border-box;"></div>
<div style="left:148.9px;top:439.4px;width:5.2px;height:5.2px;background:#c0334a;outline:1px solid #fff;"></div>
<div style="left:322.9px;top:439.4px;width:5.2px;height:5.2px;background:#c0334a;outline:1px solid #fff;"></div>
<div style="left:86.9px;top:459.9px;width:5.2px;height:5.2px;background:#8a55b8;outline:1px solid #fff;"></div>
<div style="left:86.9px;top:539.9px;width:5.2px;height:5.2px;background:#8a55b8;outline:1px solid #fff;"></div>
<div style="left:148.9px;top:459.9px;width:5.2px;height:5.2px;background:#2f6bc4;outline:1px solid #fff;"></div>
<div style="left:322.9px;top:459.9px;width:5.2px;height:5.2px;background:#2f6bc4;outline:1px solid #fff;"></div>
<div style="left:148.9px;top:539.9px;width:5.2px;height:5.2px;background:#2f6bc4;outline:1px solid #fff;"></div>
<div style="left:322.9px;top:539.9px;width:5.2px;height:5.2px;background:#2f6bc4;outline:1px solid #fff;"></div>
<svg style="left:68px;top:629px;" width="160" height="41" viewBox="0 0 160 41"><path d="M22.7 1.5 H158.5 V39.6 H22.7 V26.6 H12.2 V32.6 L1.2 20.4 L12.2 8.6 V14 H22.7 Z" fill="#fff" stroke="#217346" stroke-width="1.1"/></svg>
<span class="t" style="left:137.00px;top:641.87px;font-size:14.5px;line-height:17px;color:#217346;transform:scaleX(1.0205);">Назад</span>
<svg style="left:860px;top:629px;" width="162" height="41" viewBox="0 0 162 41"><path d="M1.5 1.5 H137.6 V14 H148.8 V7.8 L159.2 20.4 L148.8 33 V26.6 H137.6 V39.6 H1.5 Z" fill="#fff" stroke="#217346" stroke-width="1.1"/></svg>
<span class="t" style="left:907.10px;top:641.87px;font-size:14.5px;line-height:17px;color:#217346;transform:scaleX(1.0310);">Далее</span>
<div style="left:368px;top:346px;width:300px;height:262px;background:#fff;"></div>
<div style="left:668px;top:384px;width:46px;height:224px;background:#fff;"></div>
<svg style="left:0px;top:0px;" width="1587" height="873" viewBox="0 0 1587 873"><rect x="367.5" y="345.5" width="347" height="263" fill="none" stroke="#9a9a9a" stroke-width="1.4"/><path d="M423.5 389.8 L519.4 411.8" stroke="#a6a6a6" stroke-width="1"/><path d="M541 494 L541.00 409.00 A85 85 0 0 1 567.78 574.67 Z" fill="#4472c4" stroke="#fff" stroke-width="1.6" stroke-linejoin="round"/><path d="M541 494 L567.78 574.67 A85 85 0 0 1 458.13 512.91 Z" fill="#ed7d31" stroke="#fff" stroke-width="1.6" stroke-linejoin="round"/><path d="M541 494 L458.13 512.91 A85 85 0 0 1 499.29 419.94 Z" fill="#a5a5a5" stroke="#fff" stroke-width="1.6" stroke-linejoin="round"/><path d="M541 494 L499.29 419.94 A85 85 0 0 1 541.00 409.00 Z" fill="#ffc000" stroke="#fff" stroke-width="1.6" stroke-linejoin="round"/><circle cx="367.5" cy="345.5" r="4.3" fill="#fff" stroke="#8a8a8a" stroke-width="1.4"/><circle cx="541" cy="345.5" r="4.3" fill="#fff" stroke="#8a8a8a" stroke-width="1.4"/><circle cx="714.5" cy="345.5" r="4.3" fill="#fff" stroke="#8a8a8a" stroke-width="1.4"/><circle cx="367.5" cy="477" r="4.3" fill="#fff" stroke="#8a8a8a" stroke-width="1.4"/><circle cx="714.5" cy="477" r="4.3" fill="#fff" stroke="#8a8a8a" stroke-width="1.4"/><circle cx="367.5" cy="608.5" r="4.3" fill="#fff" stroke="#8a8a8a" stroke-width="1.4"/><circle cx="541" cy="608.5" r="4.3" fill="#fff" stroke="#8a8a8a" stroke-width="1.4"/><circle cx="714.5" cy="608.5" r="4.3" fill="#fff" stroke="#8a8a8a" stroke-width="1.4"/><circle cx="541.0" cy="409.0" r="3.1" fill="#b5dcf7" stroke="#3d9be6" stroke-width="1.2"/><circle cx="541.0" cy="494.0" r="3.1" fill="#b5dcf7" stroke="#3d9be6" stroke-width="1.2"/><circle cx="567.8" cy="574.7" r="3.1" fill="#b5dcf7" stroke="#3d9be6" stroke-width="1.2"/><path d="M708.5 383 C690 391.5 655 393 629 382.5" fill="none" stroke="#217346" stroke-width="2" stroke-dasharray="2 2"/><path d="M622.6 378.2 L632.2 379.2 L628 386.6 Z" fill="#217346"/></svg>
<span class="t" style="left:443.60px;top:358.00px;font-size:17px;line-height:20px;color:#595959;transform:scaleX(0.9953);">Продажи за апрель 2019</span>
<span class="t" style="left:374.20px;top:381.23px;font-size:11px;line-height:13px;color:#404040;transform:scaleX(0.9438);">Светлана</span>
<span class="t" style="left:384.00px;top:395.63px;font-size:11px;line-height:13px;color:#404040;transform:scaleX(0.9461);">200</span>
<svg style="left:404.34px;top:398.06px;" width="6.16" height="7.88" viewBox="0 0 6.16 7.88"><path d="M1.85 7.88 V0.45 H3.82 C6.47 0.45 6.47 4.41 3.82 4.41 H0 M0 5.99 H4.44" fill="none" stroke="#404040" stroke-width="0.9"/></svg>
<span class="t" style="left:469.60px;top:458.63px;font-size:11px;line-height:13px;color:#404040;transform:scaleX(0.9812);">Арина</span>
<span class="t" style="left:471.50px;top:473.83px;font-size:11px;line-height:13px;color:#404040;transform:scaleX(0.9461);">500</span>
<svg style="left:491.84px;top:476.26px;" width="6.16" height="7.88" viewBox="0 0 6.16 7.88"><path d="M1.85 7.88 V0.45 H3.82 C6.47 0.45 6.47 4.41 3.82 4.41 H0 M0 5.99 H4.44" fill="none" stroke="#404040" stroke-width="0.9"/></svg>
<span class="t" style="left:577.70px;top:461.03px;font-size:11px;line-height:13px;color:#404040;transform:scaleX(1.0153);">Артем</span>
<span class="t" style="left:576.00px;top:475.63px;font-size:11px;line-height:13px;color:#404040;transform:scaleX(0.9651);">1 100</span>
<svg style="left:605.54px;top:478.06px;" width="6.16" height="7.88" viewBox="0 0 6.16 7.88"><path d="M1.85 7.88 V0.45 H3.82 C6.47 0.45 6.47 4.41 3.82 4.41 H0 M0 5.99 H4.44" fill="none" stroke="#404040" stroke-width="0.9"/></svg>
<span class="t" style="left:482.80px;top:531.03px;font-size:11px;line-height:13px;color:#404040;transform:scaleX(1.0401);">Дмитрий</span>
<span class="t" style="left:492.50px;top:545.93px;font-size:11px;line-height:13px;color:#404040;transform:scaleX(0.9461);">650</span>
<svg style="left:512.84px;top:548.36px;" width="6.16" height="7.88" viewBox="0 0 6.16 7.88"><path d="M1.85 7.88 V0.45 H3.82 C6.47 0.45 6.47 4.41 3.82 4.41 H0 M0 5.99 H4.44" fill="none" stroke="#404040" stroke-width="0.9"/></svg>
<div style="left:728px;top:344px;width:28px;height:28px;background:#fff;border:1px solid #ababab;box-sizing:border-box;"></div>
<div style="left:728px;top:382px;width:28px;height:28px;background:#fff;border:1px solid #ababab;box-sizing:border-box;"></div>
<div style="left:728px;top:420px;width:28px;height:28px;background:#fff;border:1px solid #ababab;box-sizing:border-box;"></div>
<svg style="left:734.5px;top:350.5px;" width="15" height="15" viewBox="0 0 15 15"><path d="M5.6 0.5 H9.4 V5.6 H14.5 V9.4 H9.4 V14.5 H5.6 V9.4 H0.5 V5.6 H5.6 Z" fill="#5aa17f"/></svg>
<svg style="left:733px;top:386.5px;" width="19" height="19" viewBox="0 0 19 19"><path d="M18 0.5 L17.8 4 L11.6 11.2 L9 8.8 Z" fill="#595959"/><path d="M8.6 9.2 L11.2 11.8 C9.5 15.8 5 16.8 0.5 16 C4 14.6 4.5 10.6 8.6 9.2 Z" fill="#3b78c4"/><path d="M8.2 11 L9.6 12.4" stroke="#fff" stroke-width="1" opacity="0.7"/></svg>
<svg style="left:732.8px;top:425.8px;" width="19" height="17" viewBox="0 0 19 17"><path d="M0.3 0.5 H18.4 L11.2 8.2 V16 H7.8 V8.2 Z" fill="#6b6b6b"/><path d="M9 9 H10 V15 H9 Z" fill="#fff" opacity="0.85"/></svg>
<div style="left:1209px;top:203px;width:22px;height:617px;background:#e6e6e6;"></div>
<div style="left:1212px;top:205.5px;width:14.5px;height:14px;background:#fff;border:1px solid #c8c8c8;box-sizing:border-box;"></div>
<div style="left:1212px;top:221px;width:14.5px;height:563px;background:#fff;border:1px solid #c8c8c8;box-sizing:border-box;"></div>
<div style="left:1212px;top:806px;width:14.5px;height:14px;background:#fff;border:1px solid #c8c8c8;box-sizing:border-box;"></div>
<div style="left:1213px;top:784px;width:13px;height:22px;background:#dcdcdc;"></div>
<div style="left:1169.5px;top:828px;width:25px;height:13px;background:#dcdcdc;"></div>
<div style="left:1216px;top:811px;width:0;height:0;border-left:3.5px solid transparent;border-right:3.5px solid transparent;border-top:4.5px solid #555;"></div>
<div style="left:1216px;top:210px;width:0;height:0;border-left:3.5px solid transparent;border-right:3.5px solid transparent;border-bottom:4.5px solid #777;"></div>
<div style="left:2px;top:820px;width:1229px;height:28px;background:#e8e8e8;"></div>
<div style="left:2px;top:820px;width:1207px;height:1px;background:#ababab;"></div>
<div style="left:29px;top:829.5px;width:0;height:0;border-top:4px solid transparent;border-bottom:4px solid transparent;border-right:4.5px solid #c6c6c6;"></div>
<div style="left:57.5px;top:829px;width:0;height:0;border-top:4.5px solid transparent;border-bottom:4.5px solid transparent;border-left:5px solid #217346;"></div>
<div style="left:105px;top:823px;width:67px;height:21.5px;background:#217346;"></div>
<span class="t" style="left:115.40px;top:825.55px;font-size:13px;line-height:16px;color:#fff;transform:scaleX(0.9736);">Начало</span>
<div style="left:176.3px;top:823.3px;width:27.0px;height:20.5px;background:#dcdcdc;"></div>
<span class="t" style="left:185.93px;top:825.75px;font-size:13px;line-height:16px;color:#262626;transform:scaleX(1.0000);">1</span>
<div style="left:207.8px;top:823.3px;width:26.5px;height:20.5px;background:#dcdcdc;"></div>
<span class="t" style="left:217.18px;top:825.75px;font-size:13px;line-height:16px;color:#262626;transform:scaleX(1.0000);">2</span>
<div style="left:236.3px;top:820px;width:31.5px;height:25px;background:#fff;border-left:1px solid #ababab;border-right:1px solid #ababab;border-bottom:2px solid #217346;box-sizing:border-box;"></div>
<span class="t" style="left:248.33px;top:825.75px;font-size:13px;line-height:16px;color:#217346;font-weight:700;transform:scaleX(1.0000);">3</span>
<div style="left:270.1px;top:823.3px;width:26.399999999999977px;height:20.5px;background:#dcdcdc;"></div>
<span class="t" style="left:279.43px;top:825.75px;font-size:13px;line-height:16px;color:#262626;transform:scaleX(1.0000);">4</span>
<div style="left:301.0px;top:823.3px;width:26.5px;height:20.5px;background:#dcdcdc;"></div>
<span class="t" style="left:310.38px;top:825.75px;font-size:13px;line-height:16px;color:#262626;transform:scaleX(1.0000);">5</span>
<div style="left:332.0px;top:823.3px;width:26.19999999999999px;height:20.5px;background:#dcdcdc;"></div>
<span class="t" style="left:341.23px;top:825.75px;font-size:13px;line-height:16px;color:#262626;transform:scaleX(1.0000);">6</span>
<div style="left:362.7px;top:823.3px;width:26.5px;height:20.5px;background:#dcdcdc;"></div>
<span class="t" style="left:372.08px;top:825.75px;font-size:13px;line-height:16px;color:#262626;transform:scaleX(1.0000);">7</span>
<div style="left:393.7px;top:823.3px;width:26.5px;height:20.5px;background:#dcdcdc;"></div>
<span class="t" style="left:403.08px;top:825.75px;font-size:13px;line-height:16px;color:#262626;transform:scaleX(1.0000);">8</span>
<div style="left:424.7px;top:823.3px;width:26.69999999999999px;height:20.5px;background:#dcdcdc;"></div>
<span class="t" style="left:434.18px;top:825.75px;font-size:13px;line-height:16px;color:#262626;transform:scaleX(1.0000);">9</span>
<div style="left:455.9px;top:823.3px;width:33.30000000000001px;height:20.5px;background:#dcdcdc;"></div>
<span class="t" style="left:465.07px;top:825.75px;font-size:13px;line-height:16px;color:#262626;transform:scaleX(1.0000);">10</span>
<div style="left:493.7px;top:823.3px;width:33.50000000000006px;height:20.5px;background:#dcdcdc;"></div>
<span class="t" style="left:503.45px;top:825.75px;font-size:13px;line-height:16px;color:#262626;transform:scaleX(1.0000);">11</span>
<div style="left:531.7px;top:823.3px;width:33.799999999999955px;height:20.5px;background:#dcdcdc;"></div>
<span class="t" style="left:541.12px;top:825.75px;font-size:13px;line-height:16px;color:#262626;transform:scaleX(1.0000);">12</span>
<div style="left:570.0px;top:823.3px;width:33.299999999999955px;height:20.5px;background:#dcdcdc;"></div>
<span class="t" style="left:579.17px;top:825.75px;font-size:13px;line-height:16px;color:#262626;transform:scaleX(1.0000);">13</span>
<div style="left:607.8px;top:823.3px;width:33.5px;height:20.5px;background:#dcdcdc;"></div>
<span class="t" style="left:617.07px;top:825.75px;font-size:13px;line-height:16px;color:#262626;transform:scaleX(1.0000);">14</span>
<div style="left:645.8px;top:823.3px;width:33.60000000000002px;height:20.5px;background:#dcdcdc;"></div>
<span class="t" style="left:655.12px;top:825.75px;font-size:13px;line-height:16px;color:#262626;transform:scaleX(1.0000);">15</span>
<div style="left:102.0px;top:824px;width:1px;height:20px;background:#ababab;"></div>
<div style="left:173.3px;top:824px;width:1px;height:20px;background:#ababab;"></div>
<div style="left:204.8px;top:824px;width:1px;height:20px;background:#ababab;"></div>
<div style="left:298.0px;top:824px;width:1px;height:20px;background:#ababab;"></div>
<div style="left:329.0px;top:824px;width:1px;height:20px;background:#ababab;"></div>
<div style="left:359.7px;top:824px;width:1px;height:20px;background:#ababab;"></div>
<div style="left:390.7px;top:824px;width:1px;height:20px;background:#ababab;"></div>
<div style="left:421.7px;top:824px;width:1px;height:20px;background:#ababab;"></div>
<div style="left:452.9px;top:824px;width:1px;height:20px;background:#ababab;"></div>
<div style="left:490.7px;top:824px;width:1px;height:20px;background:#ababab;"></div>
<div style="left:528.7px;top:824px;width:1px;height:20px;background:#ababab;"></div>
<div style="left:567.0px;top:824px;width:1px;height:20px;background:#ababab;"></div>
<div style="left:604.8px;top:824px;width:1px;height:20px;background:#ababab;"></div>
<div style="left:642.8px;top:824px;width:1px;height:20px;background:#ababab;"></div>
<div style="left:680.9px;top:824px;width:1px;height:20px;background:#ababab;"></div>
<div style="left:684px;top:823.3px;width:9.5px;height:20.5px;background:#dcdcdc;"></div>
<div style="left:702.6px;top:836px;width:2px;height:2px;background:#217346;"></div>
<div style="left:706.6px;top:836px;width:2px;height:2px;background:#217346;"></div>
<div style="left:710.6px;top:836px;width:2px;height:2px;background:#217346;"></div>
<svg style="left:726.5px;top:826px;" width="16" height="16" viewBox="0 0 16 16"><circle cx="8" cy="8" r="7.2" fill="none" stroke="#777" stroke-width="1.2"/><path d="M8 4 V12 M4 8 H12" stroke="#777" stroke-width="1.6"/></svg>
<div style="left:762.7px;top:829px;width:2px;height:2px;background:#b5b5b5;"></div>
<div style="left:762.7px;top:833px;width:2px;height:2px;background:#b5b5b5;"></div>
<div style="left:762.7px;top:837px;width:2px;height:2px;background:#b5b5b5;"></div>
<div style="left:780px;top:827.5px;width:15px;height:14px;background:#fff;border:1px solid #c8c8c8;box-sizing:border-box;"></div>
<div style="left:795.5px;top:827.5px;width:374px;height:14px;background:#fff;border:1px solid #c8c8c8;box-sizing:border-box;"></div>
<div style="left:1194.5px;top:827.5px;width:14px;height:14px;background:#fff;border:1px solid #c8c8c8;box-sizing:border-box;"></div>
<div style="left:784.5px;top:830.5px;width:0;height:0;border-top:4px solid transparent;border-bottom:4px solid transparent;border-right:4.5px solid #555;"></div>
<div style="left:1199.5px;top:830.5px;width:0;height:0;border-top:4px solid transparent;border-bottom:4px solid transparent;border-left:4.5px solid #555;"></div>
<div style="left:2px;top:848px;width:1583px;height:22px;background:#f3f3f3;"></div>
<div style="left:2px;top:848px;width:1583px;height:1px;background:#d0d0d0;"></div>
<span class="t" style="left:10.60px;top:852.03px;font-size:11.7px;line-height:14px;color:#444;transform:scaleX(0.9974);">Готово</span>
<div style="left:1270.5px;top:849px;width:40px;height:21px;background:#c9c9c9;"></div>
<svg style="left:1283.5px;top:852px;" width="14" height="13" viewBox="0 0 14 13"><rect x="0.5" y="0.5" width="13" height="12" fill="none" stroke="#555"/><path d="M0.5 4.5 H13.5 M0.5 8.5 H13.5 M4.8 0.5 V12.5 M9.2 0.5 V12.5" stroke="#555" stroke-width="1"/></svg>
<svg style="left:1324px;top:852px;" width="14" height="13" viewBox="0 0 14 13"><rect x="0.5" y="0.5" width="13" height="12" fill="none" stroke="#555"/><rect x="3.5" y="2.5" width="7" height="8" fill="none" stroke="#555"/><path d="M5 5.5h4M5 7.5h4" stroke="#555" stroke-width="0.8"/></svg>
<svg style="left:1363.5px;top:852px;" width="14" height="13" viewBox="0 0 14 13"><rect x="0.5" y="0.5" width="13" height="12" fill="none" stroke="#555"/><path d="M4.5 0.5 V7.5 H13.5 M9 0.5 V7.5" fill="none" stroke="#555"/></svg>
<div style="left:1397px;top:858.5px;width:7.5px;height:1px;background:#444;"></div>
<div style="left:1410.5px;top:859px;width:99px;height:1px;background:#a0a0a0;"></div>
<div style="left:1458px;top:853.5px;width:4.5px;height:11px;background:#6e6e6e;"></div>
<div style="left:1514.5px;top:858.5px;width:8px;height:1px;background:#444;"></div>
<div style="left:1518px;top:855px;width:1px;height:8px;background:#444;"></div>
<span class="t" style="left:1536.20px;top:852.33px;font-size:11.7px;line-height:14px;color:#333;transform:scaleX(0.9052);">100 %</span>
<div style="left:1231px;top:203px;width:354px;height:645px;background:#e6e6e6;"></div>
<div style="left:1230px;top:203px;width:1px;height:645px;background:#c6c6c6;"></div>
<span class="t" style="left:1244.70px;top:217.43px;font-size:20px;line-height:24px;color:#2a7a4f;transform:scaleX(1.0194);">Формат точки данных</span>
<svg style="left:1515px;top:224.5px" width="8.5" height="4.93" viewBox="0 0 8.5 4.93"><path d="M0 0 H8.5 L4.25 4.93 Z" fill="#666"/></svg>
<svg style="left:1556px;top:221px;" width="10" height="10" viewBox="0 0 10 10"><path d="M0.8 0.8 L9.2 9.2 M9.2 0.8 L0.8 9.2" stroke="#555" stroke-width="1.7"/></svg>
<span class="t" style="left:1249.50px;top:255.14px;font-size:12px;line-height:14px;color:#262626;font-weight:700;transform:scaleX(0.9564);">Параметры ряда</span>
<svg style="left:1352.5px;top:259px" width="9" height="5.22" viewBox="0 0 9 5.22"><path d="M0 0 H9 L4.5 5.22 Z" fill="#666"/></svg>
<svg style="left:1249px;top:281px;" width="26" height="26" viewBox="0 0 26 26"><path d="M9.5 5.5 L21.5 14.5 L11.5 24.5 L1.5 14.8 Z" fill="#fff" stroke="#666" stroke-width="1.3" stroke-linejoin="round"/><path d="M10.5 11 V4.5 C10.5 1.2 14.8 1.2 14.8 4.5 V8" fill="none" stroke="#666" stroke-width="1.2"/><circle cx="10.5" cy="11.2" r="1.3" fill="#666"/><path d="M15.5 8.2 C22 8.5 25.5 13 23 21.5 C22.5 18 21.8 16 20.2 14 Z" fill="#777"/></svg>
<svg style="left:1290.5px;top:282.5px;" width="22" height="25" viewBox="0 0 22 25"><path d="M11 1 L20.6 8.2 L17 19.3 H5 L1.4 8.2 Z" fill="#fff" stroke="#666" stroke-width="1.2" stroke-linejoin="round"/><path d="M4.5 21.2 H17.5" stroke="#777" stroke-width="1.8"/><path d="M5 19.5 L3.5 24 M17 19.5 L18.5 24" stroke="#bbb" stroke-width="1"/></svg>
<div style="left:1326px;top:280px;width:30px;height:30px;background:#a6a6a6;"></div>
<div style="left:1330.8px;top:290.2px;width:6.3px;height:14.6px;background:#217346;"></div>
<div style="left:1338px;top:284.1px;width:6.1px;height:20.7px;background:#217346;"></div>
<div style="left:1344.9px;top:287px;width:6.2px;height:17.8px;background:#217346;"></div>
<svg style="left:1244px;top:315px;" width="328" height="11" viewBox="0 0 328 11"><path d="M0 9.5 H90.5 L97 2 L103.5 9.5 H327" fill="none" stroke="#c8c8c8" stroke-width="1"/></svg>
<svg style="left:1252px;top:335px;" width="7" height="7" viewBox="0 0 7 7"><path d="M6.2 0.3 V6.2 H0.3 Z" fill="#444"/></svg>
<span class="t" style="left:1266.50px;top:333.14px;font-size:12px;line-height:14px;color:#217346;font-weight:700;transform:scaleX(0.9554);">Параметры ряда</span>
<span class="t" style="left:1266.20px;top:354.73px;font-size:11.7px;line-height:14px;color:#333;transform:scaleX(1.0120);">Построить ряд</span>
<div style="left:1278px;top:385.4px;width:9.8px;height:9.8px;background:#fbfbfb;border-radius:50%;border:1px solid #dadada;box-sizing:border-box;"></div>
<div style="left:1280.5px;top:387.9px;width:4.8px;height:4.8px;background:#c4c4c4;border-radius:50%;"></div>
<div style="left:1278px;top:407.4px;width:9.8px;height:9.8px;background:#f7f7f7;border-radius:50%;border:1px solid #dadada;box-sizing:border-box;"></div>
<span class="t" style="left:1294.20px;top:383.73px;font-size:11.7px;line-height:14px;color:#a3a3a3;transform:scaleX(1.0475);">По основной оси</span>
<span class="t" style="left:1294.20px;top:405.73px;font-size:11.7px;line-height:14px;color:#a3a3a3;transform:scaleX(1.0447);">По вспомогательной оси</span>
<div style="left:1313px;top:396px;width:7px;height:1px;background:#a3a3a3;"></div>
<div style="left:1313px;top:418px;width:6.5px;height:1px;background:#a3a3a3;"></div>
<span class="t" style="left:1266.20px;top:430.13px;font-size:11.7px;line-height:14px;color:#333;transform:scaleX(1.0374);">Угол поворота первого сектора</span>
<div style="left:1273.3px;top:442.5px;width:5.2px;height:1px;background:#333;"></div>
<span class="t" style="left:1266.20px;top:472.93px;font-size:11.7px;line-height:14px;color:#333;transform:scaleX(0.9996);">Вырезание сектора</span>
<div style="left:1266px;top:485.3px;width:7px;height:1px;background:#333;"></div>
<div style="left:1274.5px;top:453px;width:197px;height:1px;background:#a0a0a0;"></div>
<div style="left:1274px;top:448.5px;width:1.6px;height:10px;background:#555;"></div>
<div style="left:1478px;top:443.5px;width:72.5px;height:20.5px;background:#fff;border:1px solid #c8c8c8;box-sizing:border-box;"></div>
<span class="t" style="left:1485.40px;top:447.53px;font-size:11px;line-height:13px;color:#555;transform:scaleX(1.0000);">0°</span>
<div style="left:1540.5px;top:448.0px;width:0;height:0;border-left:2.5px solid transparent;border-right:2.5px solid transparent;border-bottom:3px solid #555;"></div>
<div style="left:1540.5px;top:457.0px;width:0;height:0;border-left:2.5px solid transparent;border-right:2.5px solid transparent;border-top:3px solid #555;"></div>
<div style="left:1274.5px;top:496px;width:197px;height:1px;background:#a0a0a0;"></div>
<div style="left:1274px;top:491.5px;width:1.6px;height:10px;background:#555;"></div>
<div style="left:1478px;top:487.5px;width:72.5px;height:20.5px;background:#fff;border:1px solid #c8c8c8;box-sizing:border-box;"></div>
<span class="t" style="left:1485.40px;top:491.53px;font-size:11px;line-height:13px;color:#555;transform:scaleX(1.0000);">0 %</span>
<div style="left:1540.5px;top:492.0px;width:0;height:0;border-left:2.5px solid transparent;border-right:2.5px solid transparent;border-bottom:3px solid #555;"></div>
<div style="left:1540.5px;top:501.0px;width:0;height:0;border-left:2.5px solid transparent;border-right:2.5px solid transparent;border-top:3px solid #555;"></div>
<div style="left:1584px;top:64px;width:1px;height:806px;background:#eaf7f0;"></div>
<div style="left:2px;top:869.3px;width:1583px;height:0.7px;background:#f8fffb;"></div>
</body></html>
